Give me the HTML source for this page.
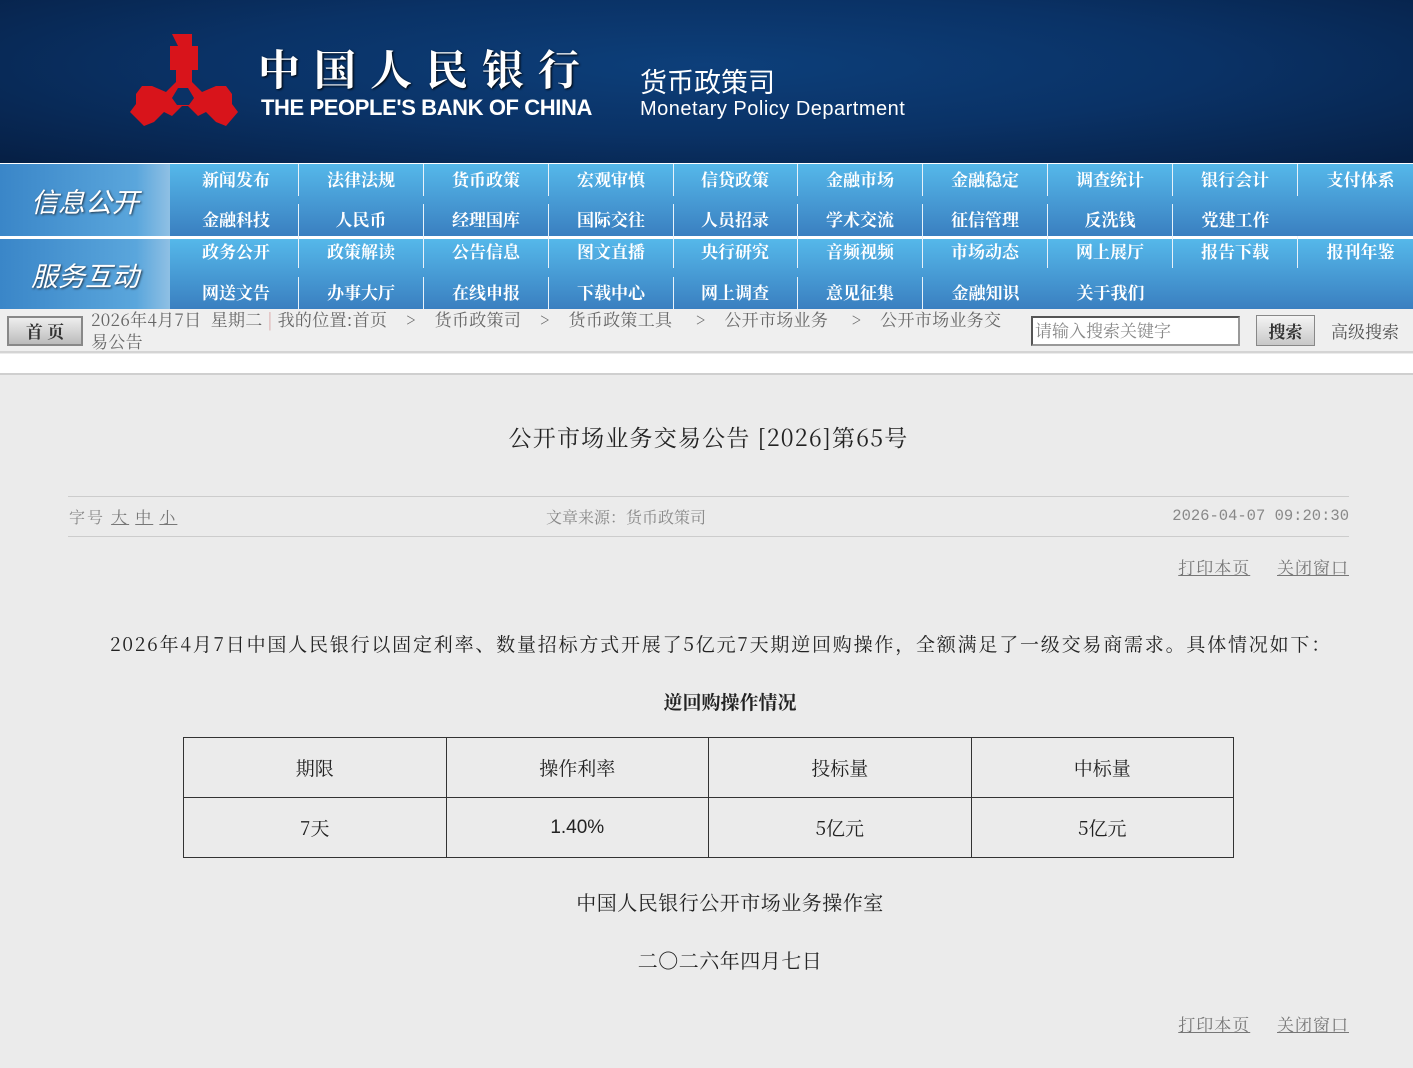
<!DOCTYPE html>
<html><head><meta charset="utf-8"><style>
*{margin:0;padding:0;box-sizing:border-box}
body{width:1413px;height:1068px;background:#ebebeb;font-family:"Noto Serif CJK SC","Liberation Serif",serif;position:relative;overflow:hidden}
.hdr{position:absolute;left:0;top:0;width:1413px;height:163px;background:radial-gradient(ellipse at 50% 40%,#0d3f7a 0%,#0a3266 50%,#061f44 100%)}
.abs{position:absolute}
.nav{position:absolute;left:0;width:1413px;background:linear-gradient(#55b8ea,#3a7fc0)}
.lab{position:absolute;left:0;top:0;width:170px;height:100%;background:linear-gradient(90deg,#3a86c8,#5aa6dc 80%,#8fc0e4);color:#fff;font-style:italic;font-size:27px;font-family:"Noto Sans CJK SC",sans-serif;display:flex;align-items:center;justify-content:center;text-shadow:1px 1px 2px #234}
.it{position:absolute;width:125px;text-align:center;color:#fff;font-weight:bold;font-size:17px;font-family:"Noto Serif CJK SC",serif;border-right:1px solid #e8f2fa;height:32px;line-height:30px}
.crumb{position:absolute;top:309px;left:0;width:1413px;height:44px;background:#efefef;border-bottom:2px solid #d4d4d4;color:#666;font-size:16px}
.wh{position:absolute;top:354px;left:0;width:1413px;height:21px;background:#fff;border-bottom:2px solid #cfcfcf}
table{position:absolute;left:183px;top:737px;width:1051px;border-collapse:collapse}
td{border:1px solid #333;height:60px;text-align:center;font-size:19px;color:#222;width:25%}
a{color:#777;text-decoration:underline}
</style></head><body>
<div class="hdr">
<svg class="abs" style="left:130px;top:34px" width="110" height="96" viewBox="0 0 110 96"><path fill="#d8141b" d="M42 0h20v12h6v24h-6v12l10 10 14-6h10l6 8v10l6 8-12 14-10-4-10-10-8 4-10-10-6 0-10 10-8-4-10 10-10 4-14-14 6-8v-10l6-8h10l14 6 10-10V36h-6V12h8z"/><path fill="#0a3266" d="M48 54h10l6 10-5 7h-12l-5-7z"/></svg>
<div class="abs" style="left:258px;top:44px;color:#fff;font-size:42px;font-weight:bold;letter-spacing:14px;font-family:'Noto Serif CJK SC',serif;line-height:48px;text-shadow:1px 1px 2px #000">中国人民银行</div>
<div class="abs" style="left:261px;top:95px;color:#fff;font-size:22px;font-weight:bold;font-family:'Liberation Sans',sans-serif;letter-spacing:-0.4px">THE PEOPLE'S BANK OF CHINA</div>
<div class="abs" style="left:640px;top:64px;color:#fff;font-size:27px;font-family:'Noto Sans CJK SC',sans-serif;line-height:34px">货币政策司</div>
<div class="abs" style="left:640px;top:98px;color:#fff;font-size:20px;letter-spacing:0.5px;font-family:'Liberation Sans',sans-serif">Monetary Policy Department</div>
</div>
<div style="position:absolute;top:163px;left:0;width:1413px;height:76px;background:#fff"></div>
<div class="nav" style="top:164px;height:72px"><div class="lab">信息公开</div>
<div class="it" style="left:174px;top:0">新闻发布</div><div class="it" style="left:299px;top:0">法律法规</div><div class="it" style="left:424px;top:0">货币政策</div><div class="it" style="left:549px;top:0">宏观审慎</div><div class="it" style="left:673px;top:0">信贷政策</div><div class="it" style="left:798px;top:0">金融市场</div><div class="it" style="left:923px;top:0">金融稳定</div><div class="it" style="left:1048px;top:0">调查统计</div><div class="it" style="left:1173px;top:0">银行会计</div><div class="it" style="left:1298px;top:0;border:0">支付体系</div>
<div class="it" style="left:174px;top:40px">金融科技</div><div class="it" style="left:299px;top:40px">人民币</div><div class="it" style="left:424px;top:40px">经理国库</div><div class="it" style="left:549px;top:40px">国际交往</div><div class="it" style="left:673px;top:40px">人员招录</div><div class="it" style="left:798px;top:40px">学术交流</div><div class="it" style="left:923px;top:40px">征信管理</div><div class="it" style="left:1048px;top:40px">反洗钱</div><div class="it" style="left:1173px;top:40px;border:0">党建工作</div>
</div>
<div class="nav" style="top:239px;height:70px"><div class="lab">服务互动</div>
<div class="it" style="left:174px;top:-3px">政务公开</div><div class="it" style="left:299px;top:-3px">政策解读</div><div class="it" style="left:424px;top:-3px">公告信息</div><div class="it" style="left:549px;top:-3px">图文直播</div><div class="it" style="left:673px;top:-3px">央行研究</div><div class="it" style="left:798px;top:-3px">音频视频</div><div class="it" style="left:923px;top:-3px">市场动态</div><div class="it" style="left:1048px;top:-3px">网上展厅</div><div class="it" style="left:1173px;top:-3px">报告下载</div><div class="it" style="left:1298px;top:-3px;border:0">报刊年鉴</div>
<div class="it" style="left:174px;top:38px">网送文告</div><div class="it" style="left:299px;top:38px">办事大厅</div><div class="it" style="left:424px;top:38px">在线申报</div><div class="it" style="left:549px;top:38px">下载中心</div><div class="it" style="left:673px;top:38px">网上调查</div><div class="it" style="left:798px;top:38px">意见征集</div><div class="it" style="left:923px;top:38px;border:0">金融知识</div><div class="it" style="left:1048px;top:38px;border:0">关于我们</div>
</div>
<div class="crumb">
<div class="abs" style="left:7px;top:7px;width:76px;height:30px;background:linear-gradient(#eee,#bbb);border:2px solid #888;font-weight:bold;font-size:17px;text-align:center;line-height:26px;color:#333">首 页</div>
<div class="abs" style="left:91px;top:-1px;width:935px;line-height:22px;white-space:nowrap;font-size:17px;letter-spacing:0.3px">2026年4月7日&nbsp; 星期二 <span style="color:#d8a0a0">|</span> 我的位置:首页 &nbsp;&nbsp;&nbsp;&gt;&nbsp;&nbsp;&nbsp; 货币政策司 &nbsp;&nbsp;&nbsp;&gt;&nbsp;&nbsp;&nbsp; 货币政策工具 &nbsp;&nbsp;&nbsp;&nbsp;&gt;&nbsp;&nbsp;&nbsp; 公开市场业务 &nbsp;&nbsp;&nbsp;&nbsp;&gt;&nbsp;&nbsp;&nbsp; 公开市场业务交<br>易公告</div>
<div class="abs" style="left:1031px;top:7px;width:209px;height:30px;background:#fff;border:2px solid #555;border-right-color:#999;border-bottom-color:#999;color:#888;font-size:17px;line-height:24px;padding-left:2px">请输入搜索关键字</div>
<div class="abs" style="left:1256px;top:6px;width:59px;height:31px;background:linear-gradient(#f4f4f4,#c8c8c8);border:1px solid #888;font-weight:bold;color:#333;font-size:17px;text-align:center;line-height:29px">搜索</div>
<div class="abs" style="left:1331px;top:9px;font-size:17px;color:#555">高级搜索</div>
</div>
<div class="wh"></div>
<div class="abs" style="left:0;top:420px;width:1413px;text-align:center;font-size:23px;letter-spacing:1.2px;color:#222;padding-left:4px">公开市场业务交易公告 [2026]第65号</div>
<div class="abs" style="left:68px;top:496px;width:1281px;height:41px;border-top:1px solid #ccc;border-bottom:1px solid #ccc;color:#888;font-size:16px;line-height:39px">
<span class="abs" style="left:1px;letter-spacing:2px">字号 <a>大</a> <a>中</a> <a>小</a></span>
<span class="abs" style="left:478px">文章来源：货币政策司</span>
<span class="abs" style="right:0;font-family:'Liberation Mono',monospace;font-size:15.5px">2026-04-07 09:20:30</span></div>
<div class="abs" style="right:64px;top:554px;font-size:17px;letter-spacing:1px"><a>打印本页</a>&nbsp;&nbsp;&nbsp;&nbsp; <a>关闭窗口</a></div>
<div class="abs" style="left:110px;top:630px;font-size:19px;color:#222;white-space:nowrap;letter-spacing:1.8px">2026年4月7日中国人民银行以固定利率、数量招标方式开展了5亿元7天期逆回购操作，全额满足了一级交易商需求。具体情况如下：</div>
<div class="abs" style="left:0;top:688px;width:1460px;text-align:center;font-size:19px;font-weight:bold;color:#222">逆回购操作情况</div>
<table><tr><td>期限</td><td>操作利率</td><td>投标量</td><td>中标量</td></tr>
<tr><td>7天</td><td style="font-family:'Liberation Sans',sans-serif">1.40%</td><td>5亿元</td><td>5亿元</td></tr></table>
<div class="abs" style="left:0;top:887px;width:1460px;text-align:center;font-size:20px;letter-spacing:0.5px;color:#222">中国人民银行公开市场业务操作室</div>
<div class="abs" style="left:0;top:945px;width:1460px;text-align:center;font-size:20px;letter-spacing:0.5px;color:#222">二〇二六年四月七日</div>
<div class="abs" style="right:64px;top:1011px;font-size:17px;letter-spacing:1px"><a>打印本页</a>&nbsp;&nbsp;&nbsp;&nbsp; <a>关闭窗口</a></div>
</body></html>
